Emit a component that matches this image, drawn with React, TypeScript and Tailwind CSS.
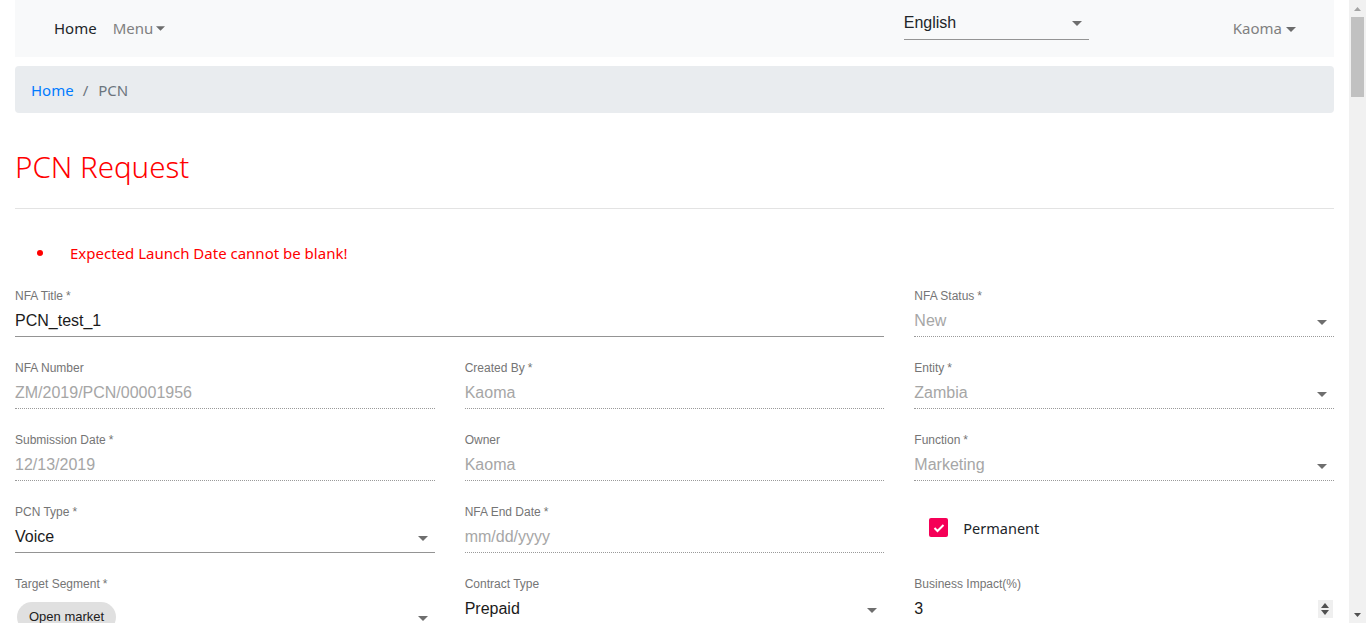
import React from 'react'

const ui = { fontFamily: '"Noto Sans", "Open Sans", sans-serif' }
const md = { fontFamily: '"Liberation Sans", Arial, sans-serif' }

function Caret({ className = '' }: { className?: string }) {
  return (
    <svg width="10" height="5" viewBox="0 0 10 5" className={className}>
      <path d="M0 0 L10 0 L5 5 Z" fill="currentColor" />
    </svg>
  )
}

interface FieldProps {
  label: string
  required?: boolean
  value: string
  disabled?: boolean
  select?: boolean
  span?: boolean
}

function Field({ label, required, value, disabled, select, span }: FieldProps) {
  return (
    <div className={span ? 'col-span-2 mb-[24px]' : 'mb-[24px]'} style={md}>
      <div className="text-[12px] leading-[14px] h-[14px] text-[#757575]">
        {label}{required && <span className="ml-[3px]">*</span>}
      </div>
      <div className={`mt-[8px] flex items-center pb-[5px] border-b ${disabled ? 'border-dotted border-[#9a9a9a]' : 'border-solid border-[#949494]'}`}>
        <span className={`flex-1 text-[16px] leading-[20px] ${disabled ? 'text-[#a6a6a6]' : 'text-[#1b1b1b]'}`}>{value}</span>
        {select && <Caret className="mr-[7px] mt-[2px] text-[#6e6e6e]" />}
      </div>
    </div>
  )
}

export default function App() {
  return (
    <div className="flex h-[623px] overflow-hidden bg-white">
      <main className="flex-1 px-[15px] overflow-hidden" style={ui}>
        <nav className="h-[57px] bg-[#f8f9fa] flex items-center pl-[39px] pr-[38px] text-[15px]">
          <span className="text-[#212529]">Home</span>
          <span className="text-[#808080] ml-[16px] flex items-center gap-[3px]">
            Menu <Caret className="w-[9px] text-[#6c6c6c]" />
          </span>
          <div className="flex-1" />
          <div className="self-start mt-[8px] w-[185px] h-[32px] flex items-start pt-[5px] border-b border-[#949494]" style={md}>
            <span className="flex-1 text-[16px] leading-[20px] text-[#212529]">English</span>
            <Caret className="mr-[7px] mt-[8px] text-[#6e6e6e]" />
          </div>
          <span className="ml-[144px] text-[#808080] flex items-center gap-[4px] mb-[1px]">
            Kaoma <Caret className="mt-[2px] text-[#6c6c6c]" />
          </span>
        </nav>

        <div className="mt-[9px] h-[47px] bg-[#e9ecef] rounded-[4px] flex items-center px-[16px] pt-[1px] text-[15px]">
          <span className="text-[#007bff]">Home</span>
          <span className="text-[#6c757d] px-[9px]">/</span>
          <span className="text-[#6c757d] ml-[1px]">PCN</span>
        </div>

        <h1 className="mt-[35px] text-[29.5px] leading-[38px] font-light text-[#ff0000]">PCN Request</h1>
        <hr className="mt-[22px] border-0 border-t border-[#e3e3e3]" />

        <div className="mt-[32px] h-[24px] flex items-center text-[15px] text-[#ff0000]">
          <span className="ml-[22px] w-[6px] h-[6px] rounded-full bg-[#ff0000]" />
          <span className="ml-[27px]">Expected Launch Date cannot be blank!</span>
        </div>

        <div className="mt-[24px] grid grid-cols-3 gap-x-[30px]">
          <Field span label="NFA Title" required value="PCN_test_1" />
          <Field label="NFA Status" required value="New" disabled select />

          <Field label="NFA Number" value="ZM/2019/PCN/00001956" disabled />
          <Field label="Created By" required value="Kaoma" disabled />
          <Field label="Entity" required value="Zambia" disabled select />

          <Field label="Submission Date" required value="12/13/2019" disabled />
          <Field label="Owner" value="Kaoma" disabled />
          <Field label="Function" required value="Marketing" disabled select />

          <Field label="PCN Type" required value="Voice" select />
          <Field label="NFA End Date" required value="mm/dd/yyyy" disabled />
          <div className="flex items-center self-start mt-[13px] pl-[15px]">
            <span className="w-[19px] h-[19px] rounded-[2px] bg-[#f50057] flex items-center justify-center">
              <svg width="12" height="10" viewBox="0 0 12 10">
                <path d="M1.5 5 L4.5 8 L10.5 2" stroke="white" strokeWidth="2" fill="none" />
              </svg>
            </span>
            <span className="ml-[15px] text-[14.5px] leading-[18px] text-[#212529]">Permanent</span>
          </div>

          <div style={md}>
            <div className="text-[12px] leading-[14px] h-[14px] text-[#757575]">Target Segment<span className="ml-[3px]">*</span></div>
            <div className="mt-[11px] flex items-center">
              <span className="ml-[2px] h-[30px] px-[12px] rounded-full bg-[#e0e0e0] text-[13px] text-[#212121] flex items-center">Open market</span>
              <div className="flex-1" />
              <Caret className="mr-[7px] mt-[2px] text-[#6e6e6e]" />
            </div>
          </div>
          <div style={md}>
            <div className="text-[12px] leading-[14px] h-[14px] text-[#757575]">Contract Type</div>
            <div className="mt-[8px] flex items-center">
              <span className="flex-1 text-[16px] leading-[20px] text-[#1b1b1b]">Prepaid</span>
              <Caret className="mr-[7px] mt-[2px] text-[#6e6e6e]" />
            </div>
          </div>
          <div style={md}>
            <div className="text-[12px] leading-[14px] h-[14px] text-[#757575]">Business Impact(%)</div>
            <div className="mt-[8px] flex items-center">
              <span className="flex-1 text-[16px] leading-[20px] text-[#1b1b1b]">3</span>
              <span className="w-[15px] h-[18px] bg-[#efefef] flex flex-col items-center justify-center gap-[2px] mr-[1px]">
                <svg width="8" height="5" viewBox="0 0 8 5"><path d="M0 5 L8 5 L4 0 Z" fill="#505050" /></svg>
                <svg width="8" height="5" viewBox="0 0 8 5"><path d="M0 0 L8 0 L4 5 Z" fill="#505050" /></svg>
              </span>
            </div>
          </div>
        </div>
      </main>

      <aside className="w-[17px] bg-[#f1f1f1] flex flex-col items-center">
        <div className="h-[17px] flex items-center justify-center">
          <svg width="7" height="4" viewBox="0 0 7 4"><path d="M0 4 L7 4 L3.5 0 Z" fill="#a3a3a3" /></svg>
        </div>
        <div className="w-[13px] h-[80px] bg-[#c1c1c1]" />
        <div className="flex-1" />
        <div className="h-[17px] flex items-center justify-center">
          <svg width="7" height="4" viewBox="0 0 7 4"><path d="M0 0 L7 0 L3.5 4 Z" fill="#505050" /></svg>
        </div>
      </aside>
    </div>
  )
}
